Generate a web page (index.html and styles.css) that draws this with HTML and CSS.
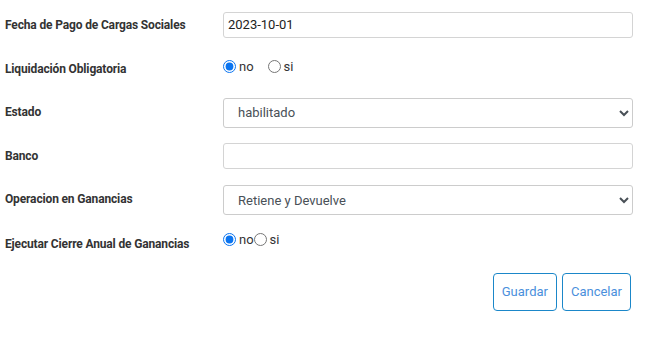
FILE: index.html
```html
<!DOCTYPE html>
<html lang="es">
<head>
<meta charset="utf-8">
<title>Formulario</title>
<link rel="stylesheet" href="styles.css">
</head>
<body>
<form class="form">
  <div class="row">
    <label class="label">Fecha de Pago de Cargas Sociales</label>
    <div class="field"><input class="input" type="text" value="2023-10-01"></div>
  </div>
  <div class="row row-radio">
    <label class="label">Liquidación Obligatoria</label>
    <div class="field radios">
      <label class="opt"><input type="radio" name="liq" checked><span>no</span></label>
      <label class="opt"><input type="radio" name="liq"><span>si</span></label>
    </div>
  </div>
  <div class="row row-select">
    <label class="label">Estado</label>
    <div class="field"><select class="select"><option>habilitado</option></select></div>
  </div>
  <div class="row">
    <label class="label">Banco</label>
    <div class="field"><input class="input" type="text" value=""></div>
  </div>
  <div class="row row-select">
    <label class="label">Operacion en Ganancias</label>
    <div class="field"><select class="select"><option>Retiene y Devuelve</option></select></div>
  </div>
  <div class="row row-radio">
    <label class="label">Ejecutar Cierre Anual de Ganancias</label>
    <div class="field radios tight">
      <label class="opt"><input type="radio" name="cierre" checked><span>no</span></label>
      <label class="opt"><input type="radio" name="cierre"><span>si</span></label>
    </div>
  </div>
  <div class="actions">
    <button type="button" class="btn">Guardar</button>
    <button type="button" class="btn">Cancelar</button>
  </div>
</form>
</body>
</html>
```
FILE: styles.css
```css
* { box-sizing: border-box; }
html, body { margin: 0; padding: 0; background: #fff; }
body {
  font-family: Roboto, "Liberation Sans", Arial, sans-serif;
  color: #333;
  font-size: 13px;
}
.form {
  width: 645px;
  padding: 3px 12px 0 5px;
}
.row {
  display: grid;
  grid-template-columns: 218px 410px;
  align-items: center;
  height: 43.6px;
}
.label {
  font-weight: 700;
  font-size: 12px;
  letter-spacing: -0.15px;
  color: #333;
}
.row-radio .label { position: relative; top: 1px; }
.row-radio .radios { position: relative; top: -2px; }
.row-radio .tight { top: -3px; }
.row-select .field { position: relative; top: 1px; }
.input {
  display: block;
  width: 410px;
  height: 26px;
  border: 1px solid #d4d4d4;
  border-radius: 3px;
  padding: 0 4px;
  font-family: inherit;
  font-size: 13px;
  color: #222;
  background: #fff;
  outline: none;
}
.select {
  display: block;
  width: 410px;
  height: 30px;
  border: 1px solid #ccc;
  border-radius: 3px;
  padding: 0 10px;
  font-family: inherit;
  font-size: 13px;
  color: #495057;
  background: #fff;
}
.radios {
  display: flex;
  align-items: center;
  gap: 14px;
}
.radios.tight { gap: 0; }
.opt {
  display: flex;
  align-items: center;
  font-size: 13px;
  color: #333;
}
.opt input { margin: 0 3px 0 0; width: 13px; height: 13px; accent-color: #0a74f0; }
.actions {
  display: flex;
  justify-content: flex-end;
  gap: 5px;
  padding-top: 8px;
  padding-right: 2px;
}
.btn {
  height: 38px;
  padding: 0 8px;
  background: #fff;
  border: 1px solid #1b87c9;
  border-radius: 4px;
  color: #4a8fdc;
  font-family: inherit;
  font-size: 13px;
}
```
